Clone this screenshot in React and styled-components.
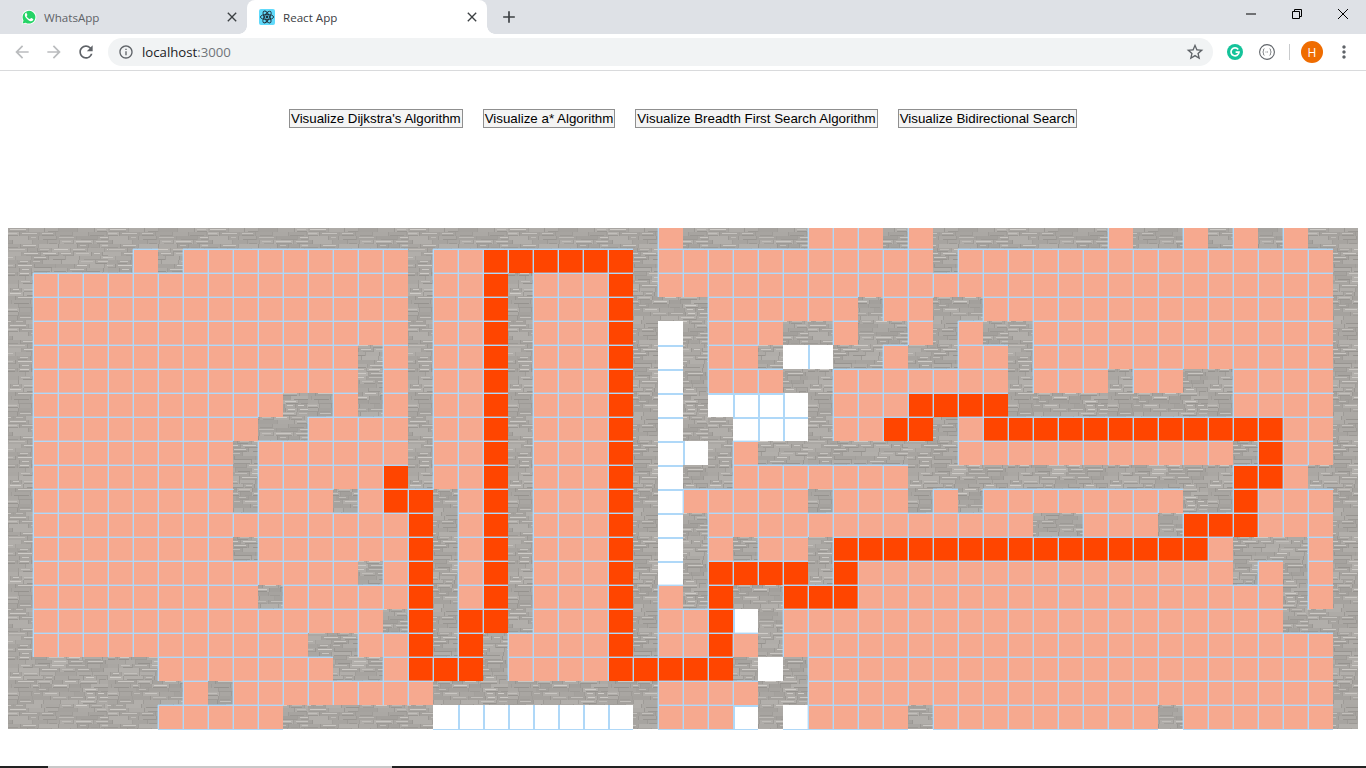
import React from "react";
import styled, { createGlobalStyle, css } from "styled-components";
import { MdAdd, MdArrowBack, MdArrowForward, MdClose, MdInfoOutline, MdMoreVert, MdRefresh, MdStarBorder } from "react-icons/md";

const GlobalStyle = createGlobalStyle`
  html, body {
    margin: 0;
    padding: 0;
    background: #fff;
    overflow: hidden;
  }
  * {
    box-sizing: border-box;
  }
`;

// one token per run of cells: # wall, . visited, * shortest path, o not reached
const ROWS = [
  "26#.5#3.#.7#.2#.#.#.2#",
  "5#.#9.#2.6*#11.#15.#",
  "#15.#2.*#3.*#27.#",
  "#15.#2.*#3.*3#6.#2.2#14.#",
  "#15.#2.*#3.*#o#3.2#.2#.#.2#12.#",
  "#13.#.#2.*#3.*#o#2.#2o2#.2#2.#12.#",
  "#13.#.#2.*#3.*#o#3.2#7.#3.#2.2#4.#",
  "#10.2#.#.#2.*#3.*#o#4o#3.4*9#4.#",
  "#9.2#4.#2.*#3.*#o2#3o#2.2*#.12*2.#",
  "#8.#6.#2.*#3.*#2o#.8#11.#*2.#",
  "#8.#5.*#2.*#3.*#o2#7.13#2*.2#",
  "#8.#3.#.2*#.*#3.*#o5.#3.#.#8.2#*3.#",
  "#15.*#.*#3.*#o#13.2#3.#3*3.#",
  "#8.#6.*#.*#3.*#o#.#2.#15*.3#.#",
  "#13.#.*#.*#3.*#o#4*#*15.#.#.#",
  "#9.#5.*#.*#3.*#.#*2#3*17.#.#",
  "#14.#*#2*#3.*#2.*o#20.3#",
  "#11.2#2.*#*#4.*#2.*.#22.#",
  "6#7.2#.3*#4.5*#o#21.#",
  "7#.#8.9#4.2#21.#",
  "6#5.6#8o#3.o#o4.#9.#6.#",
];

const expandRow = (row) =>
  [...row.matchAll(/(\d*)([#.*o])/g)].flatMap(([, n, c]) => Array(Number(n || 1)).fill(c));

const GRID = ROWS.map(expandRow);

// brick tile for the walls, a plain svg built once
const brickTile = () => {
  let seed = 7;
  const rnd = () => {
    seed = (seed * 16807) % 2147483647;
    return seed / 2147483647;
  };
  const grey = (v) => {
    const g = Math.round(v);
    return `rgb(${g + 3},${g},${g - 4})`;
  };
  const bar = (x, y, w, h, v) => `<rect x='${x}' y='${y}' width='${w}' height='${h}' fill='${grey(v)}'/>`;
  let rects = "";
  for (let y = 0; y < 96; y += 4) {
    let x = -Math.floor(rnd() * 12);
    while (x < 100) {
      const w = 10 + Math.floor(rnd() * 12);
      rects += bar(x, y, w, 4, 160 + rnd() * 16);
      if (rnd() < 0.5) rects += bar(x + 2, y + 1, w - 5, 1, 186 + rnd() * 20);
      if (rnd() < 0.6) rects += bar(x + Math.floor(rnd() * 5), y + 3, w - 4, 1, 146 + rnd() * 12);
      rects += bar(x + w - 1, y, 1, 4, 150 + rnd() * 10);
      x += w;
    }
  }
  const svg = `<svg xmlns='http://www.w3.org/2000/svg' width='100' height='96'><filter id='b'><feGaussianBlur stdDeviation='0.45'/></filter><g filter='url(#b)'><rect width='100' height='96' fill='#aaa7a2'/>${rects}</g></svg>`;
  return `url("data:image/svg+xml,${encodeURIComponent(svg)}")`;
};

const Screen = styled.div`
  width: 1366px;
  height: 768px;
  display: flex;
  flex-direction: column;
  overflow: hidden;
  font-family: "Open Sans", "Liberation Sans", sans-serif;
`;

const TabStrip = styled.div`
  height: 34px;
  flex: none;
  display: flex;
  align-items: flex-end;
  padding-left: 8px;
  background: #dee1e6;
`;

const Tab = styled.div`
  width: 239px;
  height: 34px;
  display: flex;
  align-items: center;
  padding-left: ${(p) => (p.$active ? 12 : 13)}px;
  padding-right: 7px;
  position: relative;
  font-size: 11.6px;
  color: ${(p) => (p.$active ? "#3c4043" : "#5f6368")};
  ${(p) =>
    p.$active &&
    css`
      width: 240px;
      background: #fff;
      border-radius: 8px 8px 0 0;
      &::before,
      &::after {
        content: "";
        position: absolute;
        bottom: 0;
        width: 8px;
        height: 8px;
        background: radial-gradient(circle at var(--cx) 0, #dee1e6 7.5px, #fff 8px);
      }
      &::before {
        --cx: 0;
        left: -8px;
      }
      &::after {
        --cx: 100%;
        right: -8px;
      }
    `}
`;

const TabTitle = styled.span`
  flex: 1;
  margin-left: ${(p) => (p.$active ? 8 : 7)}px;
  white-space: nowrap;
`;

const TabClose = styled.span`
  display: flex;
  color: #3c4043;
  font-size: 16px;
`;

const NewTab = styled.span`
  display: flex;
  margin-left: 12px;
  align-self: center;
  color: #3c4043;
  font-size: 20px;
`;

const WindowControls = styled.div`
  margin-left: auto;
  align-self: flex-start;
  display: flex;
`;

const WindowButton = styled.span`
  width: 46px;
  height: 28px;
  display: flex;
  align-items: center;
  justify-content: center;
`;

const Toolbar = styled.div`
  height: 37px;
  flex: none;
  display: flex;
  align-items: flex-start;
  padding: 4px 0 0 12px;
  background: #fff;
  border-bottom: 1px solid #d9dadc;
`;

const NavButton = styled.span`
  width: 32px;
  height: 28px;
  display: flex;
  align-items: center;
  font-size: 20px;
  color: ${(p) => (p.$off ? "#babcbe" : "#5f6368")};
`;

const Omnibox = styled.div`
  width: 1105px;
  height: 28px;
  display: flex;
  align-items: center;
  padding: 0 8px 0 10px;
  border-radius: 14px;
  background: #f1f3f4;
  font-size: 13.2px;
  color: #202124;
`;

const SiteInfo = styled.span`
  display: flex;
  margin-right: 8px;
  font-size: 16px;
  color: #5f6368;
`;

const Port = styled.span`
  color: #70757a;
`;

const Star = styled.span`
  margin-left: auto;
  display: flex;
  font-size: 20px;
  color: #5f6368;
`;

const Extensions = styled.div`
  flex: 1;
  height: 28px;
  display: flex;
  align-items: center;
  padding-left: 14px;
`;

const ExtensionSlot = styled.span`
  display: flex;
  margin-left: ${(p) => p.$gap || 0}px;
`;

const Divider = styled.span`
  width: 1px;
  height: 16px;
  margin: 0 11px 0 14px;
  background: #c9cbcd;
`;

const Avatar = styled.span`
  width: 22px;
  height: 22px;
  display: flex;
  align-items: center;
  justify-content: center;
  border-radius: 50%;
  background: #ef6c00;
  color: #fff;
  font-size: 12px;
`;

const MoreButton = styled.span`
  display: flex;
  margin-left: 11px;
  font-size: 20px;
  color: #5f6368;
`;

const Page = styled.div`
  flex: 1;
  padding: 38px 8px 0;
`;

const Controls = styled.div`
  display: flex;
  justify-content: center;
  gap: 20px;
  height: 19px;
  margin-bottom: 100px;
`;

const VisualizeButton = styled.button`
  height: 19px;
  padding: 0 1px;
  border: 1px solid #8f8f8f;
  border-radius: 0;
  background: #f4f4f4;
  font-family: "Liberation Sans", Arial, sans-serif;
  font-size: 13.333px;
  color: #000;
  white-space: nowrap;
`;

const Board = styled.div`
  width: 1350px;
  display: grid;
  grid-template-columns: repeat(54, 25px);
  grid-template-rows: 21px repeat(20, 24px);
  background-image: ${brickTile()};
`;

const lineBlue = "#afd8f8";
const softBlue = "rgba(175, 216, 248, 0.4)";

const Visited = styled.div`
  background: ${(p) => (p.$path ? "#ff4500" : "#f6a98f")};
  border-left: 1px solid ${lineBlue};
  border-top: ${(p) => (p.$first ? "none" : `1px solid ${lineBlue}`)};
  box-shadow: -1px 0 0 ${softBlue}, 0 -1px 0 ${(p) => (p.$first ? "transparent" : softBlue)}
    ${(p) => (p.$last ? `, 0 1px 0 ${lineBlue}` : "")};
`;

// an unreached cell only shows a line where it touches another open cell
const Unreached = styled.div`
  background: #fff;
  border-left: ${(p) => (p.$openLeft ? `2px solid ${lineBlue}` : "none")};
  border-top: ${(p) => (p.$openTop ? `2px solid ${lineBlue}` : "none")};
  box-shadow: ${(p) => (p.$last ? `0 1px 0 ${lineBlue}` : "none")};
`;

const Wall = styled.div``;

const TaskEdge = styled.div`
  height: 2px;
  flex: none;
  display: grid;
  grid-template-columns: 48px 344px 1fr;
`;

const EdgePart = styled.span`
  background: ${(p) => (p.$light ? "#c8c8c8" : "#222")};
`;

const WhatsAppIcon = () => (
  <svg width="16" height="16" viewBox="0 0 16 16">
    <path d="M.6 15.6l1.1-3.9a7.3 7.3 0 1 1 2.8 2.8z" fill="#fff" />
    <path d="M1.6 14.5l.9-3a6.4 6.4 0 1 1 2.2 2.2z" fill="#25d366" />
    <path
      d="M5.6 4.2c-.3 0-.7.1-1 .5-.4.5-.8 1.1-.8 2 0 1.2.9 2.4 1 2.6.2.2 1.8 2.8 4.4 3.7 1.2.4 2-.1 2.6-.6.4-.4.5-1 .5-1.4l-.1-.3-1.8-.9c-.2-.1-.4 0-.5.1l-.7.9c-.1.1-.3.2-.5.1-.9-.4-2.2-1.3-3-2.7-.1-.2 0-.4.1-.5l.5-.6c.1-.2.1-.3 0-.5l-.8-1.9c-.1-.3-.3-.4-.6-.4z"
      fill="#fff"
      transform="translate(0 -.8)"
    />
  </svg>
);

const ReactIcon = () => (
  <svg width="16" height="16" viewBox="0 0 16 16">
    <rect width="16" height="16" rx="2" fill="#61dafb" />
    <g fill="none" stroke="#20303c" strokeWidth="0.9">
      <ellipse cx="8" cy="8" rx="6.6" ry="2.6" />
      <ellipse cx="8" cy="8" rx="6.6" ry="2.6" transform="rotate(60 8 8)" />
      <ellipse cx="8" cy="8" rx="6.6" ry="2.6" transform="rotate(120 8 8)" />
    </g>
    <circle cx="8" cy="8" r="1.4" fill="#20303c" />
  </svg>
);

const GrammarlyIcon = () => (
  <svg width="16" height="16" viewBox="0 0 16 16">
    <circle cx="8" cy="8" r="8" fill="#15c39a" />
    <path d="M11.2 5.4a4 4 0 1 0 .8 2.8H8.6" fill="none" stroke="#fff" strokeWidth="1.7" />
  </svg>
);

const CodeIcon = () => (
  <svg width="16" height="16" viewBox="0 0 16 16">
    <circle cx="8" cy="8" r="7.4" fill="none" stroke="#5f6368" strokeWidth="1.1" />
    <path d="M5.4 4.8c-1 0-.9.7-.9 1.5 0 1-.7 1.7-.7 1.7s.7.7.7 1.7c0 .8-.1 1.5.9 1.5M10.6 4.8c1 0 .9.7.9 1.5 0 1 .7 1.7.7 1.7s-.7.7-.7 1.7c0 .8.1 1.5-.9 1.5" fill="none" stroke="#5f6368" strokeWidth="0.9" />
    <path d="M6.6 8h.8M8 8h.8" stroke="#5f6368" strokeWidth="0.9" />
  </svg>
);

const MinimizeIcon = () => (
  <svg width="10" height="10" viewBox="0 0 10 10">
    <path d="M0 5h10" stroke="#000" strokeWidth="1" />
  </svg>
);

const RestoreIcon = () => (
  <svg width="10" height="10" viewBox="0 0 10 10">
    <path d="M.5 2.5h7v7h-7zM2.5 2.5v-2h7v7h-2" fill="none" stroke="#000" strokeWidth="1" />
  </svg>
);

const CloseIcon = () => (
  <svg width="10" height="10" viewBox="0 0 10 10">
    <path d="M0 0l10 10M10 0L0 10" stroke="#000" strokeWidth="1" />
  </svg>
);

const ALGORITHMS = [
  "Visualize Dijkstra's Algorithm",
  "Visualize a* Algorithm",
  "Visualize Breadth First Search Algorithm",
  "Visualize Bidirectional Search",
];

const renderCell = (kind, r, c) => {
  const key = `${r}-${c}`;
  const last = r === GRID.length - 1;
  if (kind === "#") return <Wall key={key} />;
  if (kind === "o") {
    const openTop = r > 0 && GRID[r - 1][c] !== "#";
    const openLeft = c > 0 && GRID[r][c - 1] !== "#";
    return <Unreached key={key} $openTop={openTop} $openLeft={openLeft} $last={last} />;
  }
  return <Visited key={key} $path={kind === "*"} $first={r === 0} $last={last} />;
};

const App = () => {
  return (
    <Screen>
      <GlobalStyle />
      <TabStrip>
        <Tab>
          <WhatsAppIcon />
          <TabTitle>WhatsApp</TabTitle>
          <TabClose>
            <MdClose />
          </TabClose>
        </Tab>
        <Tab $active>
          <ReactIcon />
          <TabTitle $active>React App</TabTitle>
          <TabClose>
            <MdClose />
          </TabClose>
        </Tab>
        <NewTab>
          <MdAdd />
        </NewTab>
        <WindowControls>
          <WindowButton>
            <MinimizeIcon />
          </WindowButton>
          <WindowButton>
            <RestoreIcon />
          </WindowButton>
          <WindowButton>
            <CloseIcon />
          </WindowButton>
        </WindowControls>
      </TabStrip>
      <Toolbar>
        <NavButton $off>
          <MdArrowBack />
        </NavButton>
        <NavButton $off>
          <MdArrowForward />
        </NavButton>
        <NavButton>
          <MdRefresh />
        </NavButton>
        <Omnibox>
          <SiteInfo>
            <MdInfoOutline />
          </SiteInfo>
          localhost<Port>:3000</Port>
          <Star>
            <MdStarBorder />
          </Star>
        </Omnibox>
        <Extensions>
          <ExtensionSlot>
            <GrammarlyIcon />
          </ExtensionSlot>
          <ExtensionSlot $gap={16}>
            <CodeIcon />
          </ExtensionSlot>
          <Divider />
          <Avatar>H</Avatar>
          <MoreButton>
            <MdMoreVert />
          </MoreButton>
        </Extensions>
      </Toolbar>
      <Page>
        <Controls>
          {ALGORITHMS.map((label) => (
            <VisualizeButton key={label}>{label}</VisualizeButton>
          ))}
        </Controls>
        <Board>{GRID.map((row, r) => row.map((kind, c) => renderCell(kind, r, c)))}</Board>
      </Page>
      <TaskEdge>
        <EdgePart />
        <EdgePart $light />
        <EdgePart />
      </TaskEdge>
    </Screen>
  );
};

export default App;
